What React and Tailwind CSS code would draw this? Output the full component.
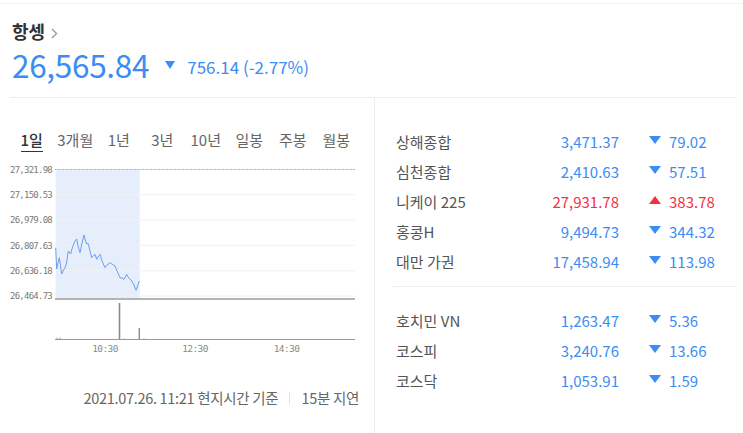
import React from "react";

const BLUE = "#3b8cf4";
const RED = "#f0333f";

const tabs = ["1일", "3개월", "1년", "3년", "10년", "일봉", "주봉", "월봉"];

const groupA = [
  { name: "상해종합", value: "3,471.37", change: "79.02", up: false },
  { name: "심천종합", value: "2,410.63", change: "57.51", up: false },
  { name: "니케이 225", value: "27,931.78", change: "383.78", up: true },
  { name: "홍콩H", value: "9,494.73", change: "344.32", up: false },
  { name: "대만 가권", value: "17,458.94", change: "113.98", up: false },
];

const groupB = [
  { name: "호치민 VN", value: "1,263.47", change: "5.36", up: false },
  { name: "코스피", value: "3,240.76", change: "13.66", up: false },
  { name: "코스닥", value: "1,053.91", change: "1.59", up: false },
];

const yLabels = [
  ["27,321.98", 168.3],
  ["27,150.53", 193.6],
  ["26,979.08", 219],
  ["26,807.63", 244.3],
  ["26,636.18", 269.8],
  ["26,464.73", 295],
];

// intraday line, page coordinates
const linePts = [
  [55.7, 246.7], [56.7, 268], [58, 262], [59.3, 256.7], [60.5, 265], [61.7, 273], [63, 270],
  [65, 266.7], [66.5, 262], [68.3, 250], [70.7, 253], [72.5, 246], [75, 240], [76.7, 238],
  [78, 245], [80, 251.7], [82, 242], [84, 234], [85.5, 240], [86.7, 243], [88.3, 242.7],
  [90, 250], [91.7, 256.7], [93, 255], [95, 253.3], [96.7, 258.3], [98, 256], [100, 253.3],
  [102, 260], [105, 266.7], [107, 264], [110, 261.7], [112, 263], [115, 265], [117, 270],
  [120, 276.7], [122, 277], [124, 278.3], [126.7, 273.3], [128, 276], [130, 278], [131.7, 280],
  [134, 284], [136, 289.3], [137.5, 285], [139.3, 280],
];

function Tri({ up }) {
  return (
    <svg width="12" height="8" viewBox="0 0 12 8" className="shrink-0">
      {up ? (
        <polygon points="0,8 12,8 6,0" fill={RED} />
      ) : (
        <polygon points="0,0 12,0 6,8" fill={BLUE} />
      )}
    </svg>
  );
}

function IndexRow({ item }) {
  const color = item.up ? "text-[#f0333f]" : "text-[#3b8cf4]";
  return (
    <div className="flex h-[30px] items-center text-[15px] leading-none">
      <div className="w-[130px] text-[#555]">{item.name}</div>
      <div className={`w-[93px] text-right ${color}`}>{item.value}</div>
      <div className="ml-[30px] -mt-[2px] flex">
        <Tri up={item.up} />
      </div>
      <div className={`ml-[8px] ${color}`}>{item.change}</div>
    </div>
  );
}

function Chart() {
  return (
    <svg width="365" height="210" className="block overflow-visible" viewBox="10 150 365 210">
      <rect x="55.7" y="168.5" width="84" height="128.5" fill="#e6eefb" />
      {[193.6, 219, 244.3, 269.8, 295].map((y) => (
        <line key={y} x1="55" x2="355" y1={y} y2={y} stroke="#f1f1f1" strokeWidth="1" />
      ))}
      <line x1="55" x2="355" y1="168.5" y2="168.5" stroke="#a8a8a8" strokeWidth="1" strokeDasharray="1 0.6" />
      <line x1="55" x2="355" y1="298" y2="298" stroke="#b4b4b4" strokeWidth="2" />
      <polyline
        points={linePts.map((p) => p.join(",")).join(" ")}
        fill="none"
        stroke="#6f9cf2"
        strokeWidth="1"
        strokeLinejoin="round"
      />
      {yLabels.map(([t, y]) => (
        <text
          key={t}
          x="52"
          y={y + 3.2}
          textAnchor="end"
          fontSize="9"
          fill="#7a7a7a"
          fontFamily="'DejaVu Sans Mono', monospace"
          letterSpacing="-0.75"
        >
          {t}
        </text>
      ))}
      {/* volume */}
      <line x1="55" x2="355" y1="338.5" y2="338.5" stroke="#9a9a9a" strokeWidth="1" />
      <rect x="118.7" y="302" width="1.6" height="36" fill="#8a8a8a" />
      <rect x="138.6" y="327" width="1.4" height="11" fill="#8a8a8a" />
      <rect x="56.5" y="336.8" width="1.2" height="1.5" fill="#999" />
      <rect x="59.5" y="336.8" width="1.2" height="1.5" fill="#999" />
      <rect x="123.5" y="337" width="1" height="1.2" fill="#bbb" />
      <rect x="143.5" y="337" width="1" height="1.2" fill="#bbb" />
      {[["10:30", 105], ["12:30", 195], ["14:30", 286.5]].map(([t, x]) => (
        <text
          key={t}
          x={x}
          y="350.5"
          textAnchor="middle"
          fontSize="9.5"
          fill="#8a8a8a"
          fontFamily="'DejaVu Sans Mono', monospace"
          letterSpacing="-0.6"
        >
          {t}
        </text>
      ))}
    </svg>
  );
}

export default function App() {
  return (
    <div
      className="relative h-[433px] w-[743px] overflow-hidden bg-white"
      style={{ fontFamily: "'Noto Sans CJK KR', 'Noto Sans', sans-serif" }}
    >
      {/* top rule */}
      <div className="mt-[3px] border-t border-[#f2f2f2]" />

      {/* header */}
      <div className="h-[93px] px-[12px] pt-[15px]">
        <div className="flex h-[24px] items-center">
          <span className="text-[18px] font-bold leading-none text-[#333]">항셍</span>
          <svg width="7" height="11" viewBox="0 0 7 11" className="ml-[6px] mt-[5px]">
            <polyline points="1,1 5.5,5.5 1,10" fill="none" stroke="#999" strokeWidth="1.4" />
          </svg>
        </div>
        <div className="mt-[4px] flex h-[35px] items-center">
          <span className="text-[31.5px] leading-none tracking-[-0.3px] text-[#3b8cf4]">26,565.84</span>
          <div className="ml-[16px] mt-[1px] flex">
            <svg width="10" height="8" viewBox="0 0 10 8">
              <polygon points="0,0 10,0 5,8" fill={BLUE} />
            </svg>
          </div>
          <span className="ml-[12px] mt-[4px] text-[17px] leading-none text-[#3b8cf4]">756.14 (-2.77%)</span>
        </div>
      </div>

      {/* body */}
      <div className="ml-[10px] mr-[6px] flex h-[337px] border-t border-[#ededed]">
        {/* left: chart */}
        <div className="w-[365px] border-r border-[#ededed] pt-[31px]">
          <div className="flex h-[20px] items-center text-[15px] leading-none text-[#666]">
            {tabs.map((t, i) => (
              <div key={t} className="w-[43.5px] text-center">
                {i === 0 ? (
                  <span className="border-b-[1.5px] border-[#333] pb-[1px] font-medium text-[#333]">{t}</span>
                ) : (
                  t
                )}
              </div>
            ))}
          </div>
          <div className="mt-[2px]">
            <Chart />
          </div>
          <div className="mt-[27px] flex h-[20px] items-center justify-end pr-[15px] text-[14.5px] leading-none tracking-[-0.3px] text-[#666]">
            <span>2021.07.26. 11:21 현지시간 기준</span>
            <span className="mx-[11px] h-[12px] w-px bg-[#e2e2e2]" />
            <span>15분 지연</span>
          </div>
        </div>

        {/* right: indices */}
        <div className="flex-1 pt-[28px]">
          <div className="pl-[21px]">
            {groupA.map((it) => (
              <IndexRow key={it.name} item={it} />
            ))}
          </div>
          <div className="ml-[18px] mt-[10px] border-t border-[#ededed]" />
          <div className="pl-[21px] pt-[18px]">
            {groupB.map((it) => (
              <IndexRow key={it.name} item={it} />
            ))}
          </div>
        </div>
      </div>
    </div>
  );
}
